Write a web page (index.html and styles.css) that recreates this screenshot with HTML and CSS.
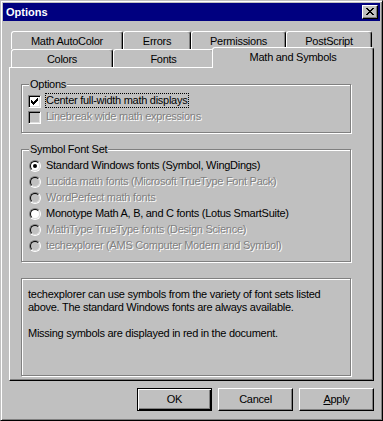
FILE: index.html
```html
<!DOCTYPE html>
<html lang="en">
<head>
<meta charset="utf-8">
<title>Options</title>
<link rel="stylesheet" href="styles.css">
</head>
<body>
<div class="window">
  <div class="titlebar">
    <span class="title">Options</span>
    <button class="close" aria-label="Close">
      <svg width="8" height="7" viewBox="0 0 8 7" shape-rendering="crispEdges"><path fill="#000" d="M0 0h2v1H0zM6 0h2v1H6zM1 1h2v1H1zM5 1h2v1H5zM2 2h4v1H2zM3 3h2v1H3zM2 4h4v1H2zM1 5h2v1H1zM5 5h2v1H5zM0 6h2v1H0zM6 6h2v1H6z"/></svg>
    </button>
  </div>
  <div class="body">
    <div class="tabs">
      <div class="tabrow">
        <div class="tab t-autocolor">Math AutoColor</div>
        <div class="tab t-errors">Errors</div>
        <div class="tab t-permissions">Permissions</div>
        <div class="tab t-postscript">PostScript</div>
      </div>
      <div class="tabrow">
        <div class="tab t-colors">Colors</div>
        <div class="tab t-fonts">Fonts</div>
        <div class="tab t-math selected">Math and Symbols</div>
      </div>
    </div>
    <div class="panel">
      <div class="group">
        <div class="group-title">Options</div>
        <div class="rows">
          <div class="row">
            <span class="check">
              <svg width="7" height="7" viewBox="0 0 7 7" shape-rendering="crispEdges"><path fill="#000" d="M6 0h1v1H6zM5 1h2v1H5zM0 2h1v1H0zM4 2h3v1H4zM0 3h2v1H0zM3 3h3v1H3zM0 4h5v1H0zM1 5h3v1H1zM2 6h1v1H2z"/></svg>
            </span>
            <span class="label focus">Center full-width math displays</span>
          </div>
          <div class="row disabled">
            <span class="check"></span>
            <span class="label">Linebreak wide math expressions</span>
          </div>
        </div>
      </div>
      <div class="group gap">
        <div class="group-title">Symbol Font Set</div>
        <div class="rows">
          <div class="row"><span class="radio on"><span class="dot"></span></span><span class="label">Standard Windows fonts (Symbol, WingDings)</span></div>
          <div class="row disabled"><span class="radio"></span><span class="label">Lucida math fonts (Microsoft TrueType Font Pack)</span></div>
          <div class="row disabled"><span class="radio"></span><span class="label">WordPerfect math fonts</span></div>
          <div class="row"><span class="radio"></span><span class="label">Monotype Math A, B, and C fonts (Lotus SmartSuite)</span></div>
          <div class="row disabled"><span class="radio"></span><span class="label">MathType TrueType fonts (Design Science)</span></div>
          <div class="row disabled"><span class="radio"></span><span class="label">techexplorer (AMS Computer Modern and Symbol)</span></div>
        </div>
      </div>
      <div class="info">
        <p>techexplorer can use symbols from the variety of font sets listed<br>above. The standard Windows fonts are always available.</p>
        <p>Missing symbols are displayed in red in the document.</p>
      </div>
    </div>
    <div class="buttons">
      <button class="btn default">OK</button>
      <button class="btn">Cancel</button>
      <button class="btn"><u>A</u>pply</button>
    </div>
  </div>
</div>
</body>
</html>
```

FILE: styles.css
```css
html, body {
  margin: 0;
  padding: 0;
  background: #c0c0c0;
}

body {
  width: 383px;
  height: 421px;
  overflow: hidden;
  font-family: "Liberation Sans", Arial, sans-serif;
  font-size: 11px;
  line-height: 13px;
  letter-spacing: -0.27px;
  color: #000;
}

.window {
  box-sizing: border-box;
  width: 383px;
  height: 421px;
  border: 1px solid;
  border-color: #c0c0c0 #000 #000 #c0c0c0;
  box-shadow: inset 1px 1px #fff, inset -1px -1px #808080;
  padding: 2px;
  background: #c0c0c0;
}

.titlebar {
  height: 18px;
  background: #000080;
  display: flex;
  align-items: center;
  justify-content: space-between;
  padding: 0 2px 0 3px;
}

.title {
  color: #fff;
  font-weight: bold;
  letter-spacing: 0;
  line-height: 18px;
}

.close {
  box-sizing: border-box;
  width: 16px;
  height: 14px;
  margin: 0;
  padding: 2px 0 0 3px;
  border: 1px solid;
  border-color: #fff #000 #000 #fff;
  box-shadow: inset -1px -1px #808080;
  background: #c0c0c0;
  display: flex;
  align-items: flex-start;
  justify-content: flex-start;
}

.close svg {
  display: block;
}

.body {
  padding: 10px 6px 0;
}

.tabs {
  padding: 0 2px;
}

.tabrow {
  display: flex;
}

.tab {
  box-sizing: border-box;
  height: 18px;
  border: 1px solid;
  border-bottom: 0;
  border-color: #fff #000 transparent #fff;
  border-radius: 3px 3px 0 0;
  box-shadow: inset -1px 0 #808080;
  padding-top: 3px;
  text-align: center;
  white-space: nowrap;
  background: #c0c0c0;
}

.t-autocolor { width: 112px; }
.t-errors { width: 68px; }
.t-permissions { width: 95px; }
.t-postscript { width: 86px; }
.t-colors { width: 102px; }
.t-fonts { width: 101px; }
.t-math { width: 158px; }

.tab.selected {
  position: relative;
  z-index: 1;
  height: 21px;
  margin: -2px -2px -1px;
  width: 162px;
}

.panel {
  box-sizing: border-box;
  height: 314px;
  border: 1px solid;
  border-color: #fff #000 #000 #fff;
  box-shadow: inset -1px -1px #808080;
  padding: 16px 0 0 11px;
}

.group {
  box-sizing: border-box;
  width: 330px;
  border: 1px solid #808080;
  box-shadow: inset 1px 1px #fff, 1px 1px #fff;
  padding: 0 6px 7px;
}

.group.gap {
  margin-top: 16px;
}

.group-title {
  width: fit-content;
  margin: -7px 0 0 1px;
  padding: 0 1px;
  background: #c0c0c0;
}

.rows {
  padding-top: 2px;
}

.row {
  display: flex;
  align-items: flex-start;
  height: 16px;
  white-space: nowrap;
}

.label {
  margin-left: 4px;
  border: 1px solid transparent;
  padding-right: 1px;
}

.label.focus {
  border: 1px dotted #000;
}

.row.disabled .label {
  color: #808080;
  text-shadow: 1px 1px 0 #fff;
}

.check {
  box-sizing: border-box;
  width: 13px;
  height: 13px;
  margin-top: 2px;
  border: 1px solid;
  border-color: #808080 #fff #fff #808080;
  box-shadow: inset 1px 1px #000, inset -1px -1px #dfdfdf;
  background: #fff;
  padding: 2px 0 0 2px;
  flex: none;
}

.check svg {
  display: block;
}

.row.disabled .check {
  background: #c0c0c0;
}

.radio {
  box-sizing: border-box;
  width: 12px;
  height: 12px;
  margin: 2px 0 0 1px;
  border-radius: 50%;
  border: 1px solid;
  border-color: #808080 #fff #fff #808080;
  flex: none;
  position: relative;
}

.radio::before {
  content: "";
  display: block;
  box-sizing: border-box;
  width: 10px;
  height: 10px;
  border-radius: 50%;
  border: 1px solid;
  border-color: #000 #dfdfdf #dfdfdf #000;
  background: #fff;
}

.row.disabled .radio::before {
  background: #c0c0c0;
}

.radio .dot {
  position: absolute;
  left: 3px;
  top: 3px;
  width: 4px;
  height: 4px;
  border-radius: 50%;
  background: #000;
}

.info {
  box-sizing: border-box;
  width: 330px;
  height: 98px;
  margin-top: 16px;
  border: 1px solid #808080;
  box-shadow: inset 1px 1px #fff, 1px 1px #fff;
  padding: 9px 6px;
}

.info p {
  margin: 0 0 13px;
  white-space: nowrap;
}

.buttons {
  display: flex;
  justify-content: flex-end;
  gap: 6px;
  margin-top: 7px;
}

.btn {
  box-sizing: border-box;
  width: 75px;
  height: 23px;
  margin: 0;
  padding: 0 0 1px;
  font: inherit;
  letter-spacing: inherit;
  line-height: 13px;
  color: #000;
  background: #c0c0c0;
  border: 1px solid;
  border-color: #fff #000 #000 #fff;
  box-shadow: inset -1px -1px #808080;
}

.btn.default {
  border-color: #000;
  box-shadow: inset 1px 1px #fff, inset -1px -1px #000, inset -2px -2px #808080;
}

.btn u {
  text-decoration: underline;
}
```
